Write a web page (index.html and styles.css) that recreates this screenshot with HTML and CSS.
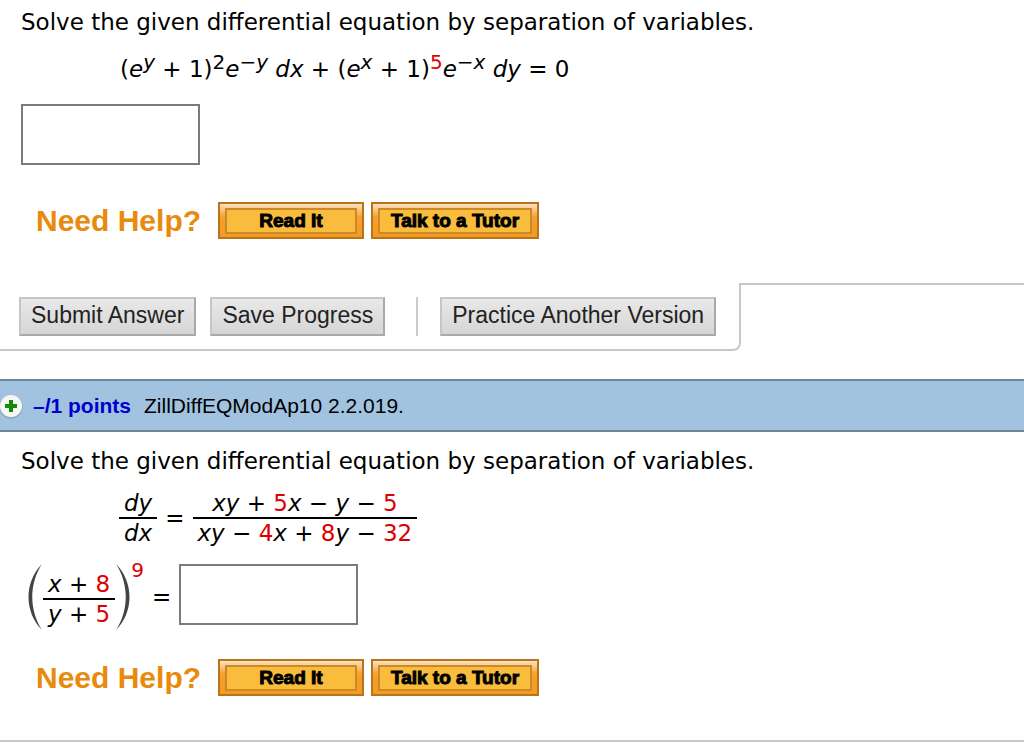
FILE: index.html
```
<!DOCTYPE html>
<html lang="en">
<head>
    <meta charset="UTF-8">
    <meta name="viewport" content="width=device-width, initial-scale=1.0">
    <title>Differential Equations Homework</title>
    <link rel="stylesheet" href="styles.css">
</head>
<body>
    <section class="question">
        <div class="content">
            <p class="prompt">Solve the given differential equation by separation of variables.</p>
            <p class="equation">(<i>e</i><sup><i>y</i></sup> + 1)<sup>2</sup><i>e</i><sup>−<i>y</i></sup> <i>dx</i> + (<i>e</i><sup><i>x</i></sup> + 1)<sup class="num">5</sup><i>e</i><sup>−<i>x</i></sup> <i>dy</i> = 0</p>
            <input class="answer" type="text" aria-label="Solution">
            <div class="help help-first">
                <span class="help-label">Need Help?</span>
                <button class="help-btn" type="button"><span>Read It</span></button>
                <button class="help-btn tutor" type="button"><span>Talk to a Tutor</span></button>
            </div>
        </div>
        <div class="footer">
            <div class="actions">
                <button class="action-btn" type="submit">Submit Answer</button>
                <button class="action-btn" type="button">Save Progress</button>
                <div class="divider"></div>
                <button class="action-btn" type="button">Practice Another Version</button>
            </div>
            <div class="footer-rest"></div>
        </div>
    </section>

    <section class="question">
        <div class="header">
            <button class="expand" type="button" aria-label="Expand">
                <svg width="24" height="26" viewBox="0 0 24 26">
                    <circle cx="11" cy="14" r="12" fill="#7e9ab3" opacity="0.5"/>
                    <circle cx="11" cy="13" r="11" fill="#f6f6f4"/>
                    <path d="M9 7h4v4h4v4h-4v4H9v-4H5v-4h4z" fill="#148c0a"/>
                </svg>
            </button>
            <a class="points" href="#">–/1 points</a>
            <span class="source">ZillDiffEQModAp10 2.2.019.</span>
        </div>
        <div class="content">
            <p class="prompt">Solve the given differential equation by separation of variables.</p>
            <div class="math-row indent">
                <div class="frac">
                    <span><i>dy</i></span>
                    <span><i>dx</i></span>
                </div>
                <span class="equals">=</span>
                <div class="frac">
                    <span><i>xy</i> + <b>5</b><i>x</i> − <i>y</i> − <b>5</b></span>
                    <span><i>xy</i> − <b>4</b><i>x</i> + <b>8</b><i>y</i> − <b>32</b></span>
                </div>
            </div>
            <div class="math-row solution">
                <svg class="paren" width="16" height="68" viewBox="0 0 16 68">
                    <path d="M15 1C-3 19-3 49 15 67C2 47 2 21 15 1z"/>
                </svg>
                <div class="frac">
                    <span><i>x</i> + <b>8</b></span>
                    <span><i>y</i> + <b>5</b></span>
                </div>
                <svg class="paren" width="16" height="68" viewBox="0 0 16 68">
                    <path d="M1 1C19 19 19 49 1 67C14 47 14 21 1 1z"/>
                </svg>
                <span class="power">9</span>
                <label class="equals" for="answer2">=</label>
                <input class="answer" type="text" id="answer2">
            </div>
            <div class="help">
                <span class="help-label">Need Help?</span>
                <button class="help-btn" type="button"><span>Read It</span></button>
                <button class="help-btn tutor" type="button"><span>Talk to a Tutor</span></button>
            </div>
        </div>
        <div class="bottom-line"></div>
    </section>
</body>
</html>
```
FILE: styles.css
```
* {
    box-sizing: border-box;
}

body {
    margin: 0;
    background-color: #fff;
    color: #000;
    font-family: Verdana, "DejaVu Sans", sans-serif;
    font-size: 23px;
    line-height: 30px;
}

.content {
    padding: 7px 21px 0;
}

.prompt {
    margin: 0;
}

.equation {
    margin: 17px 0 20px 99px;
}

sup {
    font-size: 20px;
    line-height: 0;
    vertical-align: 8px;
}

b,
.num,
.power {
    color: #d00;
    font-weight: normal;
}

.answer {
    display: block;
    width: 179px;
    height: 61px;
    border: 2px solid #7b7b7b;
    background-color: #fff;
    padding: 4px 8px;
    font: inherit;
}

/* help row */
.help {
    display: flex;
    align-items: center;
    gap: 7px;
    padding-left: 15px;
    margin-top: 28px;
    font-family: Arial, "Liberation Sans", sans-serif;
}

.help-first {
    margin-top: 37px;
}

.help-label {
    width: 175px;
    color: #e88a0c;
    font-size: 30px;
    font-weight: bold;
}

.help-btn {
    width: 146px;
    height: 37px;
    padding: 4px 5px;
    border: 2px solid #b8741a;
    background: linear-gradient(#fde3c4, #f79f2c 40%, #f59a22);
    font-family: inherit;
    font-size: 19px;
    font-weight: bold;
    cursor: pointer;
}

.help-btn.tutor {
    width: 168px;
}

.help-btn span {
    display: block;
    border: 2px solid #c98a27;
    background-color: #f9bc3c;
    line-height: 22px;
    -webkit-text-stroke: 1px #000;
}

/* submit bar */
.footer {
    display: flex;
    margin-top: 44px;
}

.actions {
    display: flex;
    align-items: center;
    height: 68px;
    padding: 0 23px 0 19px;
    gap: 14px;
    border-right: 2px solid #c8c8c8;
    border-bottom: 2px solid #c8c8c8;
    border-bottom-right-radius: 8px;
}

.footer-rest {
    flex: 1;
    border-top: 2px solid #c8c8c8;
}

.action-btn {
    height: 39px;
    padding: 0 10px 2px;
    border: 2px solid;
    border-color: #c6c6c6 #a9a9a9 #a9a9a9 #c6c6c6;
    background: linear-gradient(#e8e8e8, #d6d6d6);
    color: #222;
    font-family: Arial, "Liberation Sans", sans-serif;
    font-size: 23px;
    cursor: pointer;
}

.divider {
    width: 2px;
    height: 39px;
    margin: 0 8px 0 17px;
    background-color: #ccc;
}

/* question header */
.header {
    display: flex;
    align-items: center;
    height: 53px;
    margin-top: 28px;
    border-top: 2px solid #6f8796;
    border-bottom: 2px solid #6f8796;
    background-color: #a1c3e0;
    font-family: Arial, "Liberation Sans", sans-serif;
    font-size: 21px;
}

.expand {
    display: flex;
    width: 33px;
    padding: 0;
    border: 0;
    background: none;
    cursor: pointer;
}

.points {
    margin-right: 13px;
    color: #00c;
    font-weight: bold;
    text-decoration: none;
}

.header + .content {
    padding-top: 14px;
}

/* math */
.math-row {
    display: flex;
    align-items: center;
}

.indent {
    margin: 13px 0 0 98px;
}

.frac {
    display: flex;
    flex-direction: column;
    line-height: 28px;
    text-align: center;
}

.frac span {
    padding: 0 5px;
}

.frac span:first-child {
    border-bottom: 2px solid #000;
}

.equals {
    margin: 0 8px;
}

.solution {
    margin: 16px 0 0 6px;
}

.solution .frac {
    margin-top: 4px;
}

.solution .answer {
    margin-bottom: 5px;
}

.paren {
    fill: #444;
}

.power {
    align-self: flex-start;
    font-size: 20px;
    line-height: 14px;
}

.bottom-line {
    margin-top: 44px;
    border-top: 2px solid #c8c8c8;
}
```
